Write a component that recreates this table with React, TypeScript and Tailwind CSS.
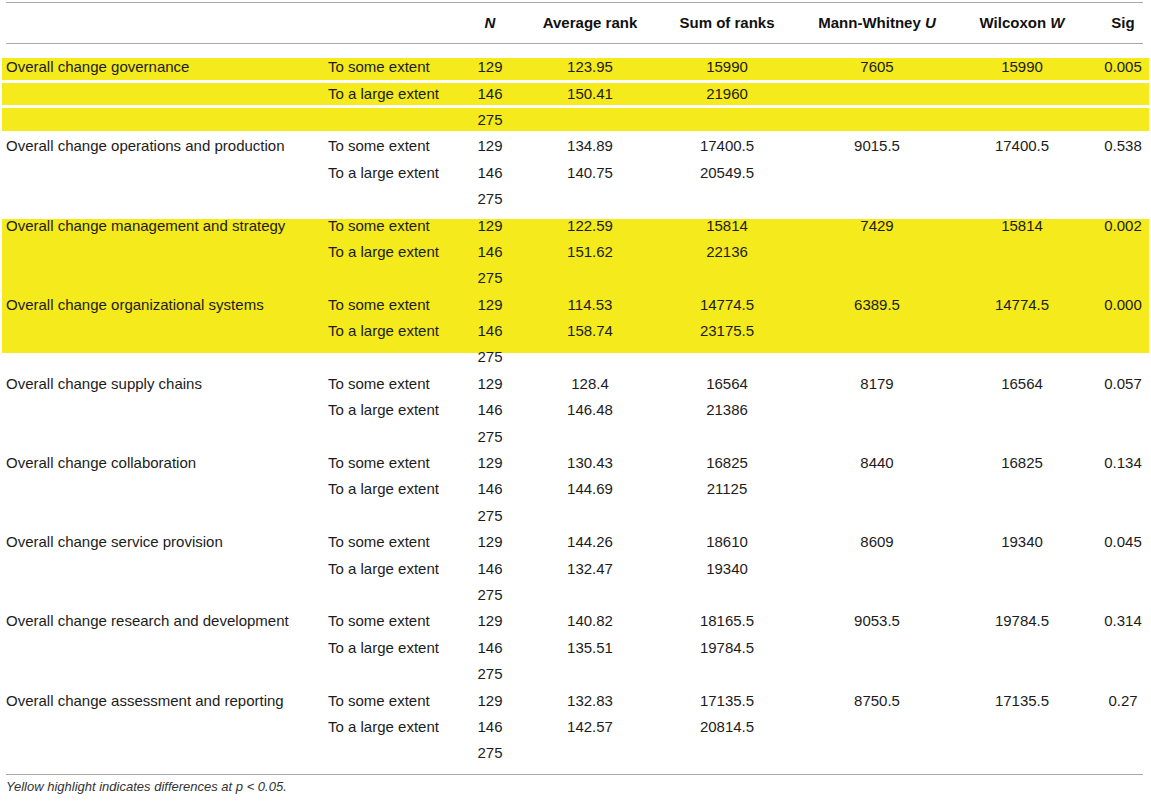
import React from "react";

type Group = {
  name: string;
  a: [string, string, string, string, string, string];
  b: [string, string, string];
};

const groups: Group[] = [
  { name: "Overall change governance", a: ["129", "123.95", "15990", "7605", "15990", "0.005"], b: ["146", "150.41", "21960"] },
  { name: "Overall change operations and production", a: ["129", "134.89", "17400.5", "9015.5", "17400.5", "0.538"], b: ["146", "140.75", "20549.5"] },
  { name: "Overall change management and strategy", a: ["129", "122.59", "15814", "7429", "15814", "0.002"], b: ["146", "151.62", "22136"] },
  { name: "Overall change organizational systems", a: ["129", "114.53", "14774.5", "6389.5", "14774.5", "0.000"], b: ["146", "158.74", "23175.5"] },
  { name: "Overall change supply chains", a: ["129", "128.4", "16564", "8179", "16564", "0.057"], b: ["146", "146.48", "21386"] },
  { name: "Overall change collaboration", a: ["129", "130.43", "16825", "8440", "16825", "0.134"], b: ["146", "144.69", "21125"] },
  { name: "Overall change service provision", a: ["129", "144.26", "18610", "8609", "19340", "0.045"], b: ["146", "132.47", "19340"] },
  { name: "Overall change research and development", a: ["129", "140.82", "18165.5", "9053.5", "19784.5", "0.314"], b: ["146", "135.51", "19784.5"] },
  { name: "Overall change assessment and reporting", a: ["129", "132.83", "17135.5", "8750.5", "17135.5", "0.27"], b: ["146", "142.57", "20814.5"] },
];

const COLS = "grid grid-cols-[320px_138px_60px_140px_134px_166px_124px_65px]";

function Row({ cells, bg = "" }: { cells: string[]; bg?: string }) {
  return (
    <div className={`${COLS} h-[26.4px] items-center ${bg}`}>
      <div className="pl-[4px] whitespace-nowrap">{cells[0]}</div>
      <div className="pl-[6px] whitespace-nowrap">{cells[1]}</div>
      <div className="text-center">{cells[2]}</div>
      <div className="text-center">{cells[3]}</div>
      <div className="text-center">{cells[4]}</div>
      <div className="text-center">{cells[5]}</div>
      <div className="text-center">{cells[6]}</div>
      <div className="pl-[13px] text-center">{cells[7]}</div>
    </div>
  );
}

function GroupRows({ g, bgs = ["", "", ""] }: { g: Group; bgs?: string[] }) {
  return (
    <>
      <Row cells={[g.name, "To some extent", ...g.a]} bg={bgs[0]} />
      <Row cells={["", "To a large extent", ...g.b, "", "", ""]} bg={bgs[1]} />
      <Row cells={["", "", "275", "", "", "", "", ""]} bg={bgs[2]} />
    </>
  );
}

export default function App() {
  return (
    <div
      className="w-[1151px] h-[801px] bg-white text-[#1c1c1c] text-[15px] leading-[18px] overflow-hidden"
      style={{ fontFamily: '"Liberation Sans", Arial, Helvetica, sans-serif' }}
    >
      <div className="ml-[2px] w-[1147px] pt-[2px]">
        <div className="ml-[4px] mr-[6px] h-[1px] bg-[#a9a9a9]" />
        <div className={`${COLS} h-[40px] items-center font-bold text-[#111]`}>
          <div />
          <div />
          <div className="text-center italic">N</div>
          <div className="text-center">Average rank</div>
          <div className="text-center">Sum of ranks</div>
          <div className="text-center">
            Mann-Whitney <span className="italic">U</span>
          </div>
          <div className="text-center">
            Wilcoxon <span className="italic">W</span>
          </div>
          <div className="pl-[13px] text-center">Sig</div>
        </div>
        <div className="ml-[4px] mr-[6px] h-[1px] bg-[#a9a9a9]" />
        <div className="pt-[10px] pb-[7px]">
          <GroupRows
            g={groups[0]}
            bgs={[
              "bg-[linear-gradient(to_bottom,transparent_4px,#f4ea1c_4px,#f4ea1c_26px,transparent_26px)]",
              "bg-[linear-gradient(to_bottom,transparent_2.5px,#f4ea1c_2.5px,#f4ea1c_24.5px,transparent_24.5px)]",
              "bg-[linear-gradient(to_bottom,transparent_1.5px,#f4ea1c_1.5px,#f4ea1c_24px,transparent_24px)]",
            ]}
          />
          <GroupRows g={groups[1]} />
          <div className="bg-[linear-gradient(to_bottom,transparent_6.6px,#f4ea1c_6.6px,#f4ea1c_140.6px,transparent_140.6px)]">
            <GroupRows g={groups[2]} />
            <GroupRows g={groups[3]} />
          </div>
          {groups.slice(4).map((g) => (
            <GroupRows key={g.name} g={g} />
          ))}
        </div>
        <div className="ml-[4px] mr-[6px] h-[1px] bg-[#a9a9a9]" />
        <div className="pl-[4px] pt-[3px] text-[13px] italic text-[#333]">
          Yellow highlight indicates differences at p &lt; 0.05.
        </div>
      </div>
    </div>
  );
}
